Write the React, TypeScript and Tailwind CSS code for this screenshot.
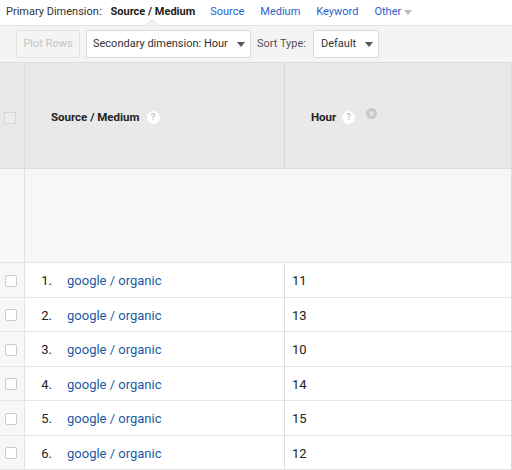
import React from "react";

const rows = [
  { n: 1, source: "google / organic", hour: "11" },
  { n: 2, source: "google / organic", hour: "13" },
  { n: 3, source: "google / organic", hour: "10" },
  { n: 4, source: "google / organic", hour: "14" },
  { n: 5, source: "google / organic", hour: "15" },
  { n: 6, source: "google / organic", hour: "12" },
];

function Caret() {
  return (
    <svg width="8" height="5" viewBox="0 0 8 5" className="ml-auto shrink-0">
      <path d="M0 0h8L4 5z" fill="#555" />
    </svg>
  );
}

function Help() {
  return (
    <span className="inline-flex items-center justify-center w-[13px] h-[13px] rounded-full bg-white text-[9px] text-[#c8c8c8] font-bold leading-none">
      ?
    </span>
  );
}

function Checkbox() {
  return <span className="block w-[12px] h-[12px] border border-[#cbcbcb] rounded-[2px] bg-white" />;
}

export default function App() {
  return (
    <div className="w-[512px] h-[470px] bg-white overflow-hidden text-[#222] font-['Roboto','Liberation_Sans',sans-serif]">
      {/* Primary dimension bar */}
      <div className="h-[25px] flex items-center pl-[6px] text-[11px] relative">
        <span className="text-[#333]">Primary Dimension:</span>
        <span className="ml-[9px] font-bold text-[#222]">Source / Medium</span>
        <span className="ml-[15px] text-[#2a5fd0]">Source</span>
        <span className="ml-[16px] text-[#2a5fd0]">Medium</span>
        <span className="ml-[16px] text-[#2a5fd0]">Keyword</span>
        <span className="ml-[16px] text-[#2a5fd0] flex items-center gap-[3px]">
          Other
          <svg width="8" height="5" viewBox="0 0 8 5">
            <path d="M0 0h8L4 5z" fill="#bbb" />
          </svg>
        </span>
        {/* notch */}
        <svg width="14" height="6" viewBox="0 0 14 6" className="absolute left-[145px] bottom-[-1px]">
          <path d="M0 6L7 0l7 6z" fill="#f4f4f4" stroke="#dedede" />
        </svg>
      </div>

      {/* Toolbar */}
      <div className="h-[37px] bg-[#f4f4f4] border-t border-[#e2e2e2] flex items-start pt-[4px] pl-[16px] text-[11px]">
        <button className="h-[28px] w-[64px] border border-[#e3e3e3] rounded-[2px] text-[#c3c3c3] bg-[#f4f4f4]">
          Plot Rows
        </button>
        <div className="ml-[6px] h-[28px] w-[165px] border border-[#d9d9d9] rounded-[2px] bg-white flex items-center pl-[6px] pr-[5px] text-[#333]">
          Secondary dimension: Hour
          <Caret />
        </div>
        <span className="ml-[6px] h-[28px] flex items-center text-[#555]">Sort Type:</span>
        <div className="ml-[7px] h-[28px] w-[66px] border border-[#d9d9d9] rounded-[2px] bg-white flex items-center pl-[7px] pr-[5px] text-[#333]">
          Default
          <Caret />
        </div>
      </div>

      {/* Table */}
      <div className="border-t border-[#dcdcdc] border-r">
        <div className="grid grid-cols-[25px_260px_1fr] h-[106px] bg-[#e9e9e9] border-b border-[#dedede] text-[11.5px] font-bold text-[#222]">
          <div className="border-r border-[#dcdcdc] flex items-center pl-[4px] pt-[4px]">
            <span className="block w-[12px] h-[12px] border border-[#d6d6d6] bg-[#ececec]" />
          </div>
          <div className="border-r border-[#d9d9d9] flex items-center pl-[26px] pt-[4px] gap-[7px]">
            Source / Medium
            <Help />
          </div>
          <div className="flex items-center pl-[26px] pt-[4px] gap-[6px]">
            Hour
            <Help />
            <span className="ml-[5px] mb-[8px] inline-flex items-center justify-center w-[11px] h-[11px] rounded-full bg-[#c9c9c9] text-white">
              <svg width="5" height="5" viewBox="0 0 5 5">
                <path d="M0.5 0.5l4 4M4.5 0.5l-4 4" stroke="#e9e9e9" strokeWidth="1.2" />
              </svg>
            </span>
          </div>
        </div>
        <div className="grid grid-cols-[25px_1fr] h-[94px] bg-[#f7f7f7] border-b border-[#e3e3e3]">
          <div className="border-r border-[#dedede]" />
          <div />
        </div>
        {rows.map((r) => (
          <div
            key={r.n}
            className="grid grid-cols-[25px_260px_1fr] h-[34.5px] border-b border-[#e6e6e6] text-[13px]"
          >
            <div className="border-r border-[#e3e3e3] bg-[#f7f7f7] flex items-center pl-[5px] pt-[2px]">
              <Checkbox />
            </div>
            <div className="border-r border-[#dcdcdc] flex items-center pt-[2px]">
              <span className="w-[27px] text-right text-[#222]">{r.n}.</span>
              <span className="ml-[15px] text-[#1c5aa3]">{r.source}</span>
            </div>
            <div className="flex items-center pl-[7px] pt-[2px] text-[#222]">{r.hour}</div>
          </div>
        ))}
      </div>
    </div>
  );
}
